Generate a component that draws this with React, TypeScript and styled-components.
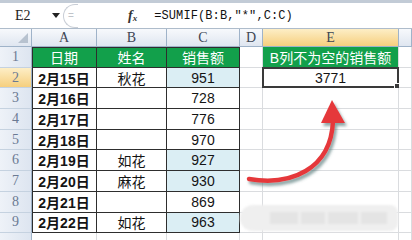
import styled, { createGlobalStyle, css } from "styled-components";

const GlobalStyle = createGlobalStyle`
  html, body {
    margin: 0;
    padding: 0;
    background: #ffffff;
    overflow: hidden;
  }
`;

const Page = styled.div`
  position: relative;
  width: 412px;
  height: 240px;
  overflow: hidden;
  font-family: "Liberation Sans", "Noto Sans CJK SC", sans-serif;
`;

// 수식 입력줄
const FormulaBar = styled.div`
  display: flex;
  align-items: center;
  height: 25px;
  border-top: 3px solid #c2cbd6;
  border-bottom: 1px solid #aebccb;
  background: #ffffff;
`;

const NameBox = styled.div`
  display: flex;
  align-items: center;
  width: 62px;
  height: 100%;
  padding-left: 15px;
  box-sizing: border-box;
  font-family: "Liberation Serif", "Noto Sans CJK SC", serif;
  font-size: 14px;
  color: #222;
`;

const Caret = styled.span`
  margin-left: 21px;
  width: 0;
  height: 0;
  border-left: 4px solid transparent;
  border-right: 4px solid transparent;
  border-top: 5px solid #222;
`;

const Splitter = styled.div`
  display: flex;
  align-items: center;
  justify-content: center;
  width: 14px;
  height: 22px;
  margin-left: 1px;
  border: 1px solid #c9ced6;
  border-right: none;
  border-radius: 12px 0 0 12px;
  font-size: 10px;
  color: #c0c4ca;
`;

const FxIcon = styled.span`
  margin-left: 50px;
  font-family: "Liberation Serif", serif;
  font-style: italic;
  font-weight: bold;
  font-size: 14px;
  color: #333;
  sub {
    font-size: 9px;
    vertical-align: -1px;
  }
`;

const FormulaText = styled.span`
  margin-left: 17px;
  font-family: "Liberation Mono", monospace;
  font-size: 12px;
  color: #111;
  letter-spacing: 0.1px;
`;

// 시트 격자
const Grid = styled.div`
  display: grid;
  grid-template-columns: 32px 65px 70px 73px 23px 136px 13px;
  grid-template-rows: 18px repeat(9, 20.7px) 20px;
`;

const headerBg = "linear-gradient(#f7f9fc, #dfe6f0)";
const activeBg = "linear-gradient(#fdeec6, #f6cf7e)";

const ColHead = styled.div<{ $active?: boolean }>`
  display: flex;
  align-items: center;
  justify-content: center;
  box-sizing: border-box;
  border-right: 1px solid #9fb3c9;
  border-bottom: 1px solid #9fb3c9;
  background: ${(p) => (p.$active ? activeBg : headerBg)};
  font-family: "Liberation Serif", serif;
  font-size: 14px;
  color: #3e4654;
`;

const Corner = styled(ColHead)`
  position: relative;
  &::after {
    content: "";
    position: absolute;
    right: 3px;
    bottom: 3px;
    border-left: 10px solid transparent;
    border-bottom: 10px solid #b7c2cf;
  }
`;

const RowHead = styled.div<{ $active?: boolean }>`
  display: flex;
  align-items: center;
  justify-content: center;
  box-sizing: border-box;
  border-right: 1px solid #9fb3c9;
  border-bottom: 1px solid #c5d2e0;
  background: ${(p) =>
    p.$active ? activeBg : "linear-gradient(90deg, #eef2f8, #dde5f0)"};
  font-family: "Liberation Serif", serif;
  font-size: 14px;
  color: #6b7a93;
`;

const Cell = styled.div<{
  $fill?: string;
  $dark?: boolean;
  $left?: boolean;
  $top?: boolean;
  $bold?: boolean;
  $white?: boolean;
  $selected?: boolean;
}>`
  position: relative;
  display: flex;
  align-items: center;
  justify-content: center;
  box-sizing: border-box;
  background: ${(p) => p.$fill ?? "#ffffff"};
  border-right: 1px solid ${(p) => (p.$dark ? "#2e2e2e" : "#dadcdf")};
  border-bottom: 1px solid ${(p) => (p.$dark ? "#2e2e2e" : "#dadcdf")};
  box-shadow: ${(p) =>
    [p.$left && "inset 1px 0 0 #2e2e2e", p.$top && "inset 0 1px 0 #2e2e2e"]
      .filter(Boolean)
      .join(", ") || "none"};
  font-size: 14px;
  font-weight: ${(p) => (p.$bold ? "bold" : "normal")};
  color: ${(p) => (p.$white ? "#ffffff" : "#141414")};
  white-space: nowrap;
  ${(p) =>
    p.$selected &&
    css`
      border: 2px solid #3a3a3a;
      margin: -1px 0 0 -1px;
      &::after {
        content: "";
        position: absolute;
        right: -4px;
        bottom: -4px;
        width: 5px;
        height: 5px;
        background: #3a3a3a;
        border: 1px solid #ffffff;
      }
    `}
`;

// 화살표와 워터마크 (내용 위에 겹침)
const Overlay = styled.svg`
  position: absolute;
  left: 0;
  top: 0;
  pointer-events: none;
`;

const Watermark = styled.div`
  position: absolute;
  left: 240px;
  top: 205px;
  width: 158px;
  height: 26px;
  border-radius: 13px 8px 8px 13px;
  background: #efefef;
  filter: blur(1.2px);
  display: flex;
  align-items: center;
  gap: 3px;
  padding: 0 10px 0 30px;
  box-sizing: border-box;
`;

const WaterBlock = styled.span<{ $w: number }>`
  width: ${(p) => p.$w}px;
  height: 12px;
  background: #e4e4e4;
`;

const GREEN = "#12a04b";
const BLUE = "#dbeef4";

type Row = { date: string; name: string; sales: string };

const rows: Row[] = [
  { date: "2月15日", name: "秋花", sales: "951" },
  { date: "2月16日", name: "", sales: "728" },
  { date: "2月17日", name: "", sales: "776" },
  { date: "2月18日", name: "", sales: "970" },
  { date: "2月19日", name: "如花", sales: "927" },
  { date: "2月20日", name: "麻花", sales: "930" },
  { date: "2月21日", name: "", sales: "869" },
  { date: "2月22日", name: "如花", sales: "963" },
];

export default function App() {
  return (
    <Page>
      <GlobalStyle />
      <FormulaBar>
        <NameBox>
          E2
          <Caret />
        </NameBox>
        <Splitter>=</Splitter>
        <FxIcon>
          f<sub>x</sub>
        </FxIcon>
        <FormulaText>=SUMIF(B:B,"*",C:C)</FormulaText>
      </FormulaBar>

      <Grid>
        <Corner />
        <ColHead>A</ColHead>
        <ColHead>B</ColHead>
        <ColHead>C</ColHead>
        <ColHead>D</ColHead>
        <ColHead $active>E</ColHead>
        <ColHead />

        <RowHead>1</RowHead>
        <Cell $fill={GREEN} $dark $left $top $white>日期</Cell>
        <Cell $fill={GREEN} $dark $top $white>姓名</Cell>
        <Cell $fill={GREEN} $dark $top $white>销售额</Cell>
        <Cell />
        <Cell $fill={GREEN} $white>B列不为空的销售额</Cell>
        <Cell />

        {rows.map((r, i) => (
          <Row key={r.date} row={r} index={i + 2} />
        ))}

        {/* 10행: 화면 아래로 잘려 번호는 보이지 않음 */}
        <RowHead />
        <Cell />
        <Cell />
        <Cell />
        <Cell />
        <Cell />
        <Cell />
      </Grid>

      <Watermark>
        <WaterBlock $w={28} />
        <WaterBlock $w={24} />
        <WaterBlock $w={30} />
        <WaterBlock $w={26} />
      </Watermark>

      <Overlay width="412" height="240" viewBox="0 0 412 240">
        <defs>
          <filter id="arrowShadow" x="-20%" y="-20%" width="140%" height="140%">
            <feDropShadow
              dx="2"
              dy="3"
              stdDeviation="1.4"
              floodColor="#4f7574"
              floodOpacity="0.65"
            />
          </filter>
        </defs>
        <g filter="url(#arrowShadow)">
          <path
            d="M249 179 C 290 186 331 170 333 121"
            fill="none"
            stroke="#e5393b"
            strokeWidth="4.5"
            strokeLinecap="round"
          />
          <path d="M332 100 L321 123 L345 123 Z" fill="#e5393b" />
        </g>
      </Overlay>
    </Page>
  );
}

function Row({ row, index }: { row: Row; index: number }) {
  const filled = row.name !== "";
  return (
    <>
      <RowHead $active={index === 2}>{index}</RowHead>
      <Cell $dark $left $bold>
        {row.date}
      </Cell>
      <Cell $dark>{row.name}</Cell>
      <Cell $dark $fill={filled ? BLUE : undefined}>
        {row.sales}
      </Cell>
      <Cell />
      {index === 2 ? <Cell $selected>3771</Cell> : <Cell />}
      <Cell />
    </>
  );
}
